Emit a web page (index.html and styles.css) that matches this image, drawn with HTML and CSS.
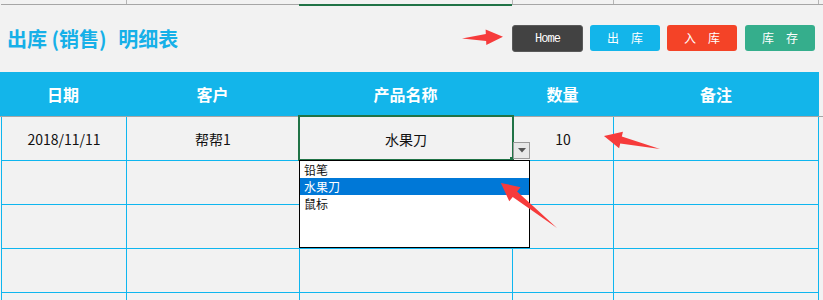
FILE: index.html
```html
<!DOCTYPE html>
<html lang="zh">
<head>
<meta charset="utf-8">
<link rel="stylesheet" href="styles.css">
</head>
<body>
<div class="page">
  <div class="topstrip">
    <div class="tc"></div><div class="tc"></div><div class="tc sel"></div><div class="tc"></div><div class="tc last"></div>
  </div>
  <div class="titlebar">
    <h1 class="title">出库 (销售) <span class="t2">明细表</span></h1>
    <div class="btns">
      <button class="btn home">Home</button>
      <button class="btn out">出　库</button>
      <button class="btn in">入　库</button>
      <button class="btn stock">库　存</button>
    </div>
  </div>
  <div class="thead">
    <div>日期</div><div>客户</div><div>产品名称</div><div>数量</div><div>备注</div>
  </div>
  <div class="hline"></div>
  <div class="grid">
    <div class="c">2018/11/11</div><div class="c">帮帮1</div><div class="c">水果刀</div><div class="c">10</div><div class="c last"></div>
    <div class="c"></div><div class="c"></div><div class="c"></div><div class="c"></div><div class="c last"></div>
    <div class="c"></div><div class="c"></div><div class="c"></div><div class="c"></div><div class="c last"></div>
    <div class="c"></div><div class="c"></div><div class="c"></div><div class="c"></div><div class="c last"></div>
    <div class="c"></div><div class="c"></div><div class="c"></div><div class="c"></div><div class="c last"></div>
  </div>

  <div class="selection"></div>
  <div class="handle"></div>
  <div class="ddbtn"><svg width="8" height="5" viewBox="0 0 8 5"><polygon points="0,0 8,0 4,4.5" fill="#555"/></svg></div>
  <ul class="ddlist">
    <li>铅笔</li>
    <li class="hl">水果刀</li>
    <li>鼠标</li>
  </ul>

  <svg class="arrows" width="823" height="300" viewBox="0 0 823 300">
    <g fill="#f63b3b">
      <polygon transform="translate(462,38.5) rotate(-2.5)" points="0,0 24,-3.5 24,-8 41,0 24,7.5 24,3.5"/>
      <polygon transform="translate(660,149) rotate(193)" points="0,0 40,-3.5 40,-8.5 57.5,0 40,8.5 40,3.5"/>
      <polygon transform="translate(557,228) rotate(218.8)" points="0,0 54,-3.5 54,-9 72,0 54,9 54,3.5"/>
    </g>
  </svg>
</div>
</body>
</html>
```

FILE: styles.css
```css
html, body {
  margin: 0;
  padding: 0;
  background: #f2f2f2;
}
body {
  font-family: "Noto Sans CJK SC", "Noto Sans", sans-serif;
  width: 823px;
  height: 300px;
  overflow: hidden;
}
.page {
  position: relative;
  width: 823px;
  height: 300px;
  overflow: hidden;
}
.topstrip {
  display: grid;
  grid-template-columns: 125px 173px 213px 101px 206px;
  margin-left: 1px;
  height: 4px;
  border-bottom: 1px solid #a6a6a6;
}
.tc {
  border-left: 1px solid #b5b5b5;
}
.tc:first-child { border-left: none; }
.tc.last { border-right: 1px solid #b5b5b5; }
.tc.sel {
  border-left: none;
  box-shadow: 0 2px 0 #217346;
}
.titlebar {
  height: 67px;
  display: flex;
  align-items: center;
  justify-content: space-between;
  padding: 0 8px 0 7px;
}
.title {
  margin: 0;
  font-size: 20px;
  font-weight: bold;
  color: #16b0e8;
}
.t2 {
  margin-left: 7px;
}
.btns {
  display: flex;
  gap: 7px;
  margin-top: -1px;
}
.btn {
  border: none;
  height: 26px;
  width: 70px;
  border-radius: 3px;
  color: #fff;
  font-family: "Noto Sans CJK SC", sans-serif;
  font-size: 12px;
  padding: 0;
  line-height: 26px;
}
.btn.home {
  width: 71px;
  height: 27px;
  background: #424242;
  font-family: "Liberation Mono", "DejaVu Sans Mono", monospace;
  font-size: 12px;
  letter-spacing: -1px;
  border: 1px solid #5a5a5a;
}
.btn.out { background: #13b5ea; }
.btn.in { background: #f44327; }
.btn.stock { background: #35ae8c; margin-left: 1px; }

.thead {
  display: grid;
  grid-template-columns: 126px 173px 213px 101px 206px;
  width: 819px;
  height: 44px;
  background: #13b5ea;
  color: #fff;
  font-size: 16px;
  font-weight: bold;
}
.thead div {
  display: flex;
  align-items: center;
  justify-content: center;
}
.hline {
  height: 0;
  border-top: 1px solid #a6a6a6;
}
.grid {
  display: grid;
  grid-template-columns: 125px 173px 213px 101px 206px;
  grid-auto-rows: 44px;
  margin-left: 1px;
}
.c {
  border-left: 1px solid #0fb6ef;
  border-bottom: 1px solid #0fb6ef;
  display: flex;
  align-items: center;
  justify-content: center;
  font-size: 14px;
  color: #111;
}
.c.last { border-right: 1px solid #0fb6ef; }

.selection {
  position: absolute;
  left: 298px;
  top: 115px;
  width: 212px;
  height: 42px;
  border: 2px solid #217346;
}
.handle {
  position: absolute;
  left: 510px;
  top: 157px;
  width: 4px;
  height: 4px;
  background: #217346;
}
.ddbtn {
  position: absolute;
  left: 513px;
  top: 142px;
  width: 15px;
  height: 15px;
  border: 1px solid #9a9a9a;
  background: #e8e8e8;
  display: flex;
  align-items: center;
  justify-content: center;
}
.ddlist {
  position: absolute;
  left: 299px;
  top: 160px;
  width: 229px;
  height: 86px;
  margin: 0;
  padding: 0;
  list-style: none;
  background: #fff;
  border: 1px solid #000;
  font-size: 12px;
  color: #111;
}
.ddlist li {
  height: 17px;
  line-height: 17px;
  padding-left: 4px;
}
.ddlist li.hl {
  background: #0078d7;
  color: #fff;
}
.arrows {
  position: absolute;
  left: 0;
  top: 0;
  pointer-events: none;
}
```
